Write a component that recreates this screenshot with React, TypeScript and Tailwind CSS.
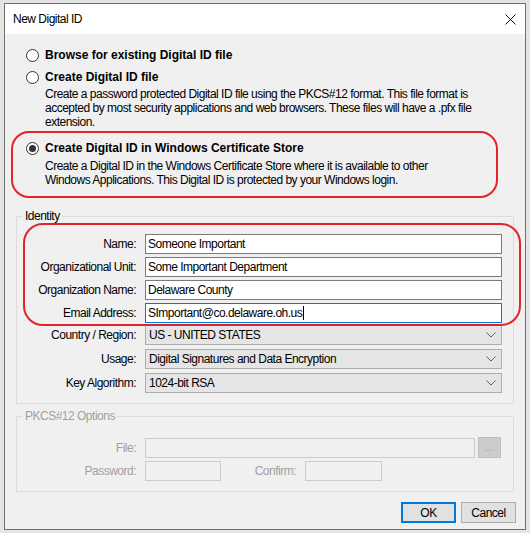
import React from "react";

const font = { fontFamily: '"Liberation Sans", Arial, sans-serif' };

function Radio({ checked }: { checked?: boolean }) {
  return (
    <span className="flex h-[13px] w-[13px] shrink-0 items-center justify-center rounded-full border border-[#333333] bg-white">
      {checked && <span className="block h-[7px] w-[7px] rounded-full bg-[#333333]" />}
    </span>
  );
}

function Chevron() {
  return (
    <svg width="10" height="6" viewBox="0 0 10 6" className="shrink-0">
      <polyline points="0.5,0.5 5,5 9.5,0.5" fill="none" stroke="#606060" strokeWidth="1" />
    </svg>
  );
}

function TextRow({ label, value, focused }: { label: string; value: string; focused?: boolean }) {
  return (
    <div className="flex h-[20px] items-center">
      <div className="w-[119px] text-right text-black">{label}</div>
      <div
        className={
          focused
            ? "ml-[9px] flex h-[20px] w-[357px] items-center border border-[#0078d7] bg-white pl-[2px] text-black"
            : "ml-[9px] flex h-[20px] w-[357px] items-center border border-[#7a7a7a] bg-white pl-[2px] text-black"
        }
      >
        <span>{value}</span>
        {focused && <span className="ml-px block h-[14px] w-px bg-black" />}
      </div>
    </div>
  );
}

function SelectRow({ label, value }: { label: string; value: string }) {
  return (
    <div className="flex h-[20px] items-center">
      <div className="w-[119px] text-right text-black">{label}</div>
      <div className="ml-[9px] flex h-[20px] w-[357px] items-center justify-between border border-[#adadad] bg-[#e5e5e5] pl-[3px] pr-[5px] text-black">
        <span>{value}</span>
        <Chevron />
      </div>
    </div>
  );
}

export default function App() {
  return (
    <div
      className="h-[533px] w-[530px] overflow-hidden bg-[#e4e4e4] pl-[4px] pt-[3px] text-[12px] leading-[14px] tracking-[-0.5px]"
      style={font}
    >
      <div className="flex h-[527px] w-[522px] flex-col border border-[#6f6f6f] bg-[#f0f0f0]">
        {/* Title bar */}
        <div className="flex h-[30px] shrink-0 items-center justify-between bg-white pl-[8px] pr-[9px]">
          <span className="text-black">New Digital ID</span>
          <svg width="11" height="11" viewBox="0 0 11 11">
            <line x1="0.5" y1="0.5" x2="10.5" y2="10.5" stroke="#111" strokeWidth="1" />
            <line x1="10.5" y1="0.5" x2="0.5" y2="10.5" stroke="#111" strokeWidth="1" />
          </svg>
        </div>

        {/* Content */}
        <div className="relative flex flex-1 flex-col pt-[13px]">
          <div className="flex h-[16px] items-center gap-[6px] pl-[21px]">
            <Radio />
            <span className="font-bold tracking-normal text-black">Browse for existing Digital ID file</span>
          </div>
          <div className="mt-[6px] flex h-[16px] items-center gap-[6px] pl-[21px]">
            <Radio />
            <span className="font-bold tracking-normal text-black">Create Digital ID file</span>
          </div>
          <div className="mt-[2px] pl-[40px] pr-[50px] text-black">
            Create a password protected Digital ID file using the PKCS#12 format. This file format is accepted by most security applications and web browsers. These files will have a .pfx file extension.
          </div>
          <div className="mt-[11px] flex h-[16px] items-center gap-[6px] pl-[21px]">
            <Radio checked />
            <span className="font-bold tracking-normal text-black">Create Digital ID in Windows Certificate Store</span>
          </div>
          <div className="mt-[3px] pl-[40px] pr-[70px] text-black">
            Create a Digital ID in the Windows Certificate Store where it is available to other Windows Applications. This Digital ID is protected by your Windows login.
          </div>

          {/* Annotation around option 3 */}
          <div className="pointer-events-none absolute left-[6px] top-[97px] h-[67px] w-[487px] rounded-[18px] border-2 border-[#e3232c]" />

          {/* Identity group */}
          <fieldset className="mx-[11px] mt-[22px] border border-[#dcdcdc] pb-[10px] pr-[10px]">
            <legend className="ml-[6px] px-[2px] text-black">Identity</legend>
            <div className="relative mt-[11px] flex flex-col">
              <div className="flex flex-col gap-[3px]">
                <TextRow label="Name:" value="Someone Important" />
                <TextRow label="Organizational Unit:" value="Some Important Department" />
                <TextRow label="Organization Name:" value="Delaware County" />
                <TextRow label="Email Address:" value="SImportant@co.delaware.oh.us" focused />
              </div>
              <div className="mt-[2px] flex flex-col gap-[4px]">
                <SelectRow label="Country / Region:" value="US - UNITED STATES" />
                <SelectRow label="Usage:" value="Digital Signatures and Data Encryption" />
                <SelectRow label="Key Algorithm:" value="1024-bit RSA" />
              </div>
              {/* Annotation around identity fields */}
              <div className="pointer-events-none absolute left-[6px] top-[-11px] h-[103px] w-[498px] rounded-[20px] border-2 border-[#e3232c]" />
            </div>
          </fieldset>

          {/* PKCS#12 group */}
          <fieldset className="mx-[11px] mt-[5px] border border-[#dcdcdc] pb-[10px] pr-[10px] text-[#a0a0a0]">
            <legend className="ml-[6px] px-[2px]">PKCS#12 Options</legend>
            <div className="mt-[14px] flex h-[21px] items-center">
              <div className="w-[119px] text-right">File:</div>
              <div className="ml-[9px] h-[20px] w-[330px] border border-[#cccccc] bg-[#f0f0f0]" />
              <div className="ml-[3px] flex h-[21px] w-[23px] items-center justify-center border border-[#bfbfbf] bg-[#cccccc] text-[10px] leading-none tracking-normal text-[#a0a0a0]">
                ...
              </div>
            </div>
            <div className="mt-[3px] flex h-[20px] items-center">
              <div className="w-[119px] text-right">Password:</div>
              <div className="ml-[9px] h-[20px] w-[76px] border border-[#cccccc] bg-[#f0f0f0]" />
              <div className="w-[75px] text-right">Confirm:</div>
              <div className="ml-[9px] h-[20px] w-[77px] border border-[#cccccc] bg-[#f0f0f0]" />
            </div>
          </fieldset>

          {/* Buttons */}
          <div className="mt-[10px] flex justify-end gap-[5px] pr-[9px]">
            <button className="flex h-[21px] w-[55px] items-center justify-center border-2 border-[#0078d7] bg-[#e1e1e1] text-black">
              OK
            </button>
            <button className="flex h-[21px] w-[55px] items-center justify-center border border-[#adadad] bg-[#e1e1e1] text-black">
              Cancel
            </button>
          </div>
        </div>
      </div>
    </div>
  );
}
